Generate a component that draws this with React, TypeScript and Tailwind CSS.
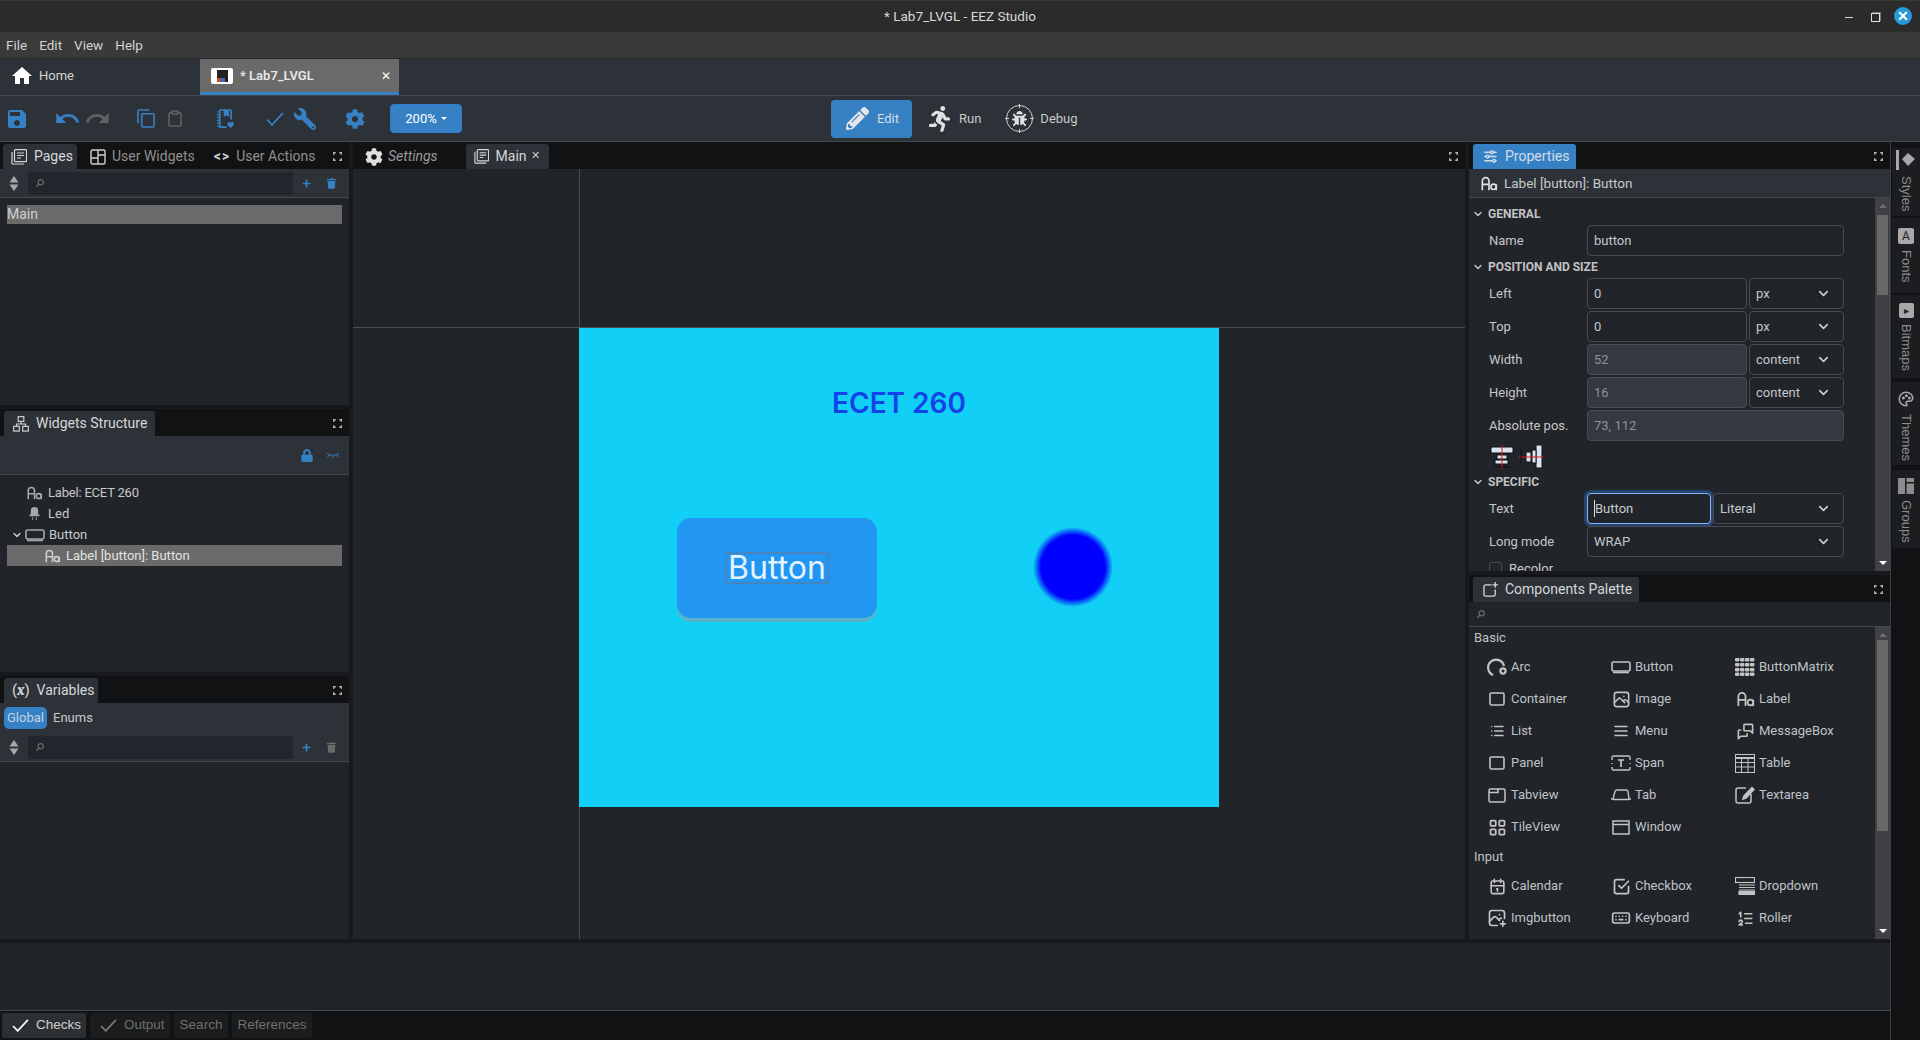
import { ReactNode } from "react"
import { FaCog, FaWrench, FaPencilAlt, FaRunning, FaTrash, FaLock, FaBug, FaSearch, FaPlus } from "react-icons/fa"
import { MdHome, MdSave, MdUndo, MdRedo } from "react-icons/md"
import {
  TbCalendar,
  TbCheckbox,
  TbChevronDown,
  TbKeyboard,
  TbLayoutGrid,
  TbListNumbers,
  TbList,
  TbMenu2,
  TbMessages,
  TbPhoto,
  TbPhotoPlus,
  TbAdjustmentsHorizontal,
  TbPalette,
} from "react-icons/tb"
import { LuClipboard } from "react-icons/lu"

const ui = "font-['Roboto','Noto_Sans',sans-serif]"

function AaIcon({ className = "w-[17px] h-[15px]" }: { className?: string }) {
  return (
    <svg viewBox="0 0 20 18" className={className} fill="none" stroke="currentColor" strokeWidth="2">
      <path d="M2 17V6a4 4 0 0 1 8 0v11M2 10h8" />
      <circle cx="15.5" cy="13" r="3.2" />
      <path d="M18.7 10v7" />
    </svg>
  )
}

function RectIcon({ wide }: { wide?: boolean }) {
  return (
    <svg viewBox="0 0 20 14" className="w-[20px] h-[14px]" fill="none" stroke="currentColor" strokeWidth="1.6">
      {wide ? <rect x="1" y="2" width="18" height="9" rx="1.5" /> : <rect x="3" y="1" width="14" height="12" rx="1.5" />}
      {wide && <path d="M2 12.5h16" />}
    </svg>
  )
}

function ArcIcon() {
  return (
    <svg viewBox="0 0 20 20" className="w-[20px] h-[20px]" fill="none" stroke="currentColor" strokeWidth="2.2">
      <path d="M6 18A8 8 0 1 1 17 9" />
      <circle cx="16" cy="14" r="2.6" />
    </svg>
  )
}

function MatrixIcon() {
  return (
    <svg viewBox="0 0 20 18" className="w-[20px] h-[18px]" fill="currentColor">
      {[0, 5, 10, 14.5].map((y) =>
        [0, 5, 10, 15].map((x) => <rect key={`${x}-${y}`} x={x} y={y} width="4.4" height="3.4" rx="0.8" />)
      )}
    </svg>
  )
}

function SpanIcon() {
  return (
    <svg viewBox="0 0 20 16" className="w-[20px] h-[16px]" fill="none" stroke="currentColor" strokeWidth="1.4">
      <path d="M1 5V2.5A1.5 1.5 0 0 1 2.5 1h15A1.5 1.5 0 0 1 19 2.5V5M1 8v1M19 8v1M1 12v1.500A1.500 1.500 0 0 0 2.500 15h15a1.500 1.500 0 0 0 1.500-1.500V12" />
      <path d="M7 5h6M10 5v7" strokeWidth="1.7" />
    </svg>
  )
}

function TableIcon() {
  return (
    <svg viewBox="0 0 20 19" className="w-[20px] h-[19px]" fill="none" stroke="currentColor" strokeWidth="1">
      <rect x="0.5" y="0.5" width="19" height="18" />
      <path d="M0 4h20" strokeWidth="2" />
      <path d="M0 8.500h20M0 13h20M6.500 4v15M13 4v15" />
    </svg>
  )
}

function TabIcon() {
  return (
    <svg viewBox="0 0 20 12" className="w-[20px] h-[12px]" fill="none" stroke="currentColor" strokeWidth="1.4">
      <path d="M0 10h2l2-7.500A2 2 0 0 1 6 1h9a2 2 0 0 1 2 1.500l1 7.500h2M2 10.500h16" />
    </svg>
  )
}

function TabviewIcon() {
  return (
    <svg viewBox="0 0 18 15" className="w-[18px] h-[15px]" fill="none" stroke="currentColor" strokeWidth="1.5">
      <rect x="1" y="1" width="16" height="13" rx="1.5" />
      <path d="M1 4.500h9V1" />
    </svg>
  )
}

function WindowIcon() {
  return (
    <svg viewBox="0 0 18 15" className="w-[18px] h-[15px]" fill="none" stroke="currentColor" strokeWidth="1.5">
      <rect x="1" y="1" width="16" height="13" />
      <path d="M1 4.500h16" />
    </svg>
  )
}

function TextareaIcon() {
  return (
    <svg viewBox="0 0 20 18" className="w-[20px] h-[18px]" fill="none" stroke="currentColor" strokeWidth="1.5">
      <path d="M11 2H3a2 2 0 0 0-2 2v11a2 2 0 0 0 2 2h11a2 2 0 0 0 2-2V8" />
      <path d="M8 13l1-3 8-8.500 2 2-8 8.500z" fill="currentColor" />
    </svg>
  )
}

function DropdownIcon() {
  return (
    <svg viewBox="0 0 20 18" className="w-[20px] h-[18px]" fill="none" stroke="currentColor" strokeWidth="1.2">
      <rect x="0.500" y="0.500" width="19" height="5" />
      <path d="M4 8h16M4 10.500h16M4 13h16" />
      <rect x="4" y="14.500" width="16" height="3" fill="currentColor" />
    </svg>
  )
}

function CheckMark({ className }: { className: string }) {
  return (
    <svg viewBox="0 0 18 14" className={className} fill="none" stroke="currentColor" strokeWidth="1.8">
      <path d="M1 7.500l5 5.300L17 1" />
    </svg>
  )
}

function PagesIcon({ className }: { className: string }) {
  return (
    <svg viewBox="0 0 16 16" className={className} fill="none" stroke="currentColor" strokeWidth="1.2">
      <path d="M1 3v11.500a.500.500 0 0 0 .500.500H13" />
      <rect x="3.500" y=".700" width="12" height="12" rx="1" />
      <path d="M6 4h7M6 6.500h7M6 9h4" />
    </svg>
  )
}

function WidgetsIcon() {
  return (
    <svg viewBox="0 0 16 16" className="w-[16px] h-[16px] text-[#d0d0d0]" fill="none" stroke="currentColor" strokeWidth="1.4">
      <rect x="1" y="1" width="14" height="14" rx="1.500" />
      <path d="M8 1v14M8 6h7M1 9h7" />
    </svg>
  )
}

function HierarchyIcon() {
  return (
    <svg viewBox="0 0 17 17" className="w-[16px] h-[16px]" fill="none" stroke="currentColor" strokeWidth="1.2">
      <rect x="5.500" y=".700" width="6" height="5" />
      <rect x=".700" y="11" width="6" height="5" />
      <rect x="10.300" y="11" width="6" height="5" />
      <path d="M8.500 5.700v2.800M3.700 11V8.500h9.600V11" />
    </svg>
  )
}

function PaletteAddIcon() {
  return (
    <svg viewBox="0 0 16 16" className="w-[15px] h-[15px]" fill="none" stroke="currentColor" strokeWidth="1.4">
      <path d="M9 3H3a2 2 0 0 0-2 2v8a2 2 0 0 0 2 2h8a2 2 0 0 0 2-2V8M13 0v6M10 3h6" />
    </svg>
  )
}

function CopyIcon() {
  return (
    <svg viewBox="0 0 19 20" className="w-[18px] h-[19px]" fill="none" stroke="currentColor" strokeWidth="1.700">
      <path d="M13 1H2.500A1.500 1.500 0 0 0 1 2.500V15" />
      <rect x="5" y="5" width="13" height="14" rx="1" />
    </svg>
  )
}

function NotebookIcon() {
  return (
    <svg viewBox="0 0 20 21" className="w-[19px] h-[20px]" fill="none" stroke="currentColor" strokeWidth="1.700">
      <path d="M4 1h11a1 1 0 0 1 1 1v9M4 1v18h7" />
      <path d="M1 3h2M1 6h2M1 9h2M1 12h2M1 15h2M1 18h2" strokeWidth="1.500" />
      <path d="M9 1v6l2-1.500L13 7V1" fill="currentColor" />
      <path d="M15.500 20l-3.300-3.300a2 2 0 0 1 3.300-2.200 2 2 0 0 1 3.300 2.200z" fill="currentColor" stroke="none" />
    </svg>
  )
}

function Expand() {
  return (
    <svg viewBox="0 0 10 10" className="w-[9px] h-[9px] text-[#b5b5b5]" fill="none" stroke="currentColor" strokeWidth="1.6">
      <path d="M0.800 3V0.800H3M7 0.800h2.200V3M9.200 7v2.200H7M3 9.200H0.800V7" />
    </svg>
  )
}

function Sort() {
  return (
    <svg viewBox="0 0 10 15" className="w-[10px] h-[15px] text-[#a8a8a8]" fill="currentColor">
      <path d="M5 0l4.500 6.500h-9zM5 15L0.500 8.500h9z" />
    </svg>
  )
}

function SearchRow({ trash }: { trash: string }) {
  return (
    <div className="h-[29px] flex items-center bg-[#2d3238] border-b border-[#44484d] shrink-0">
      <span className="w-[28px] flex justify-center"><Sort /></span>
      <div className="w-[265px] h-[23px] bg-[#22252b] flex items-center pl-[8px]">
        <FaSearch className="w-[8px] h-[8px] text-[#6e6e6e]" style={{ transform: "scaleX(-1)" }} />
      </div>
      <FaPlus className="ml-[9px] w-[9px] h-[9px] text-[#3681c4]" />
      <FaTrash className={`ml-[16px] w-[9px] h-[11px] ${trash}`} />
    </div>
  )
}

function TabRow({ children, expand = true }: { children: ReactNode; expand?: boolean }) {
  return (
    <div className="h-[27px] bg-[#111214] flex items-end shrink-0 relative">
      {children}
      {expand && <span className="ml-auto mr-[7px] mb-[8px] flex"><Expand /></span>}
    </div>
  )
}

function ActiveTab({ icon, label, className }: { icon: ReactNode; label: string; className?: string }) {
  return (
    <div className={`h-[25px] bg-[#2d3238] rounded-t-[3px] flex items-center gap-[7px] text-[14px] text-[#d7d7d7] ${className}`}>
      {icon}
      {label}
    </div>
  )
}

function PropRow({ label, children }: { label: string; children: ReactNode }) {
  return (
    <div className="h-[33px] flex items-center pl-[20px] shrink-0">
      <span className="w-[98px] text-[#c7c7c7]">{label}</span>
      <div className="flex gap-[2px]">{children}</div>
    </div>
  )
}

function Field({ value, w, disabled, focus }: { value: string; w: string; disabled?: boolean; focus?: boolean }) {
  if (focus) {
    return (
      <div className={`${w} h-[31px] border border-[#86b7fe] rounded-[4px] bg-[#212429] flex items-center px-[6px] text-[#c9c9c9] shadow-[0_0_0_3px_#24446e]`}>
        <span className="w-px h-[17px] bg-[#dddddd]" />
        {value}
      </div>
    )
  }
  return (
    <div className={`${w} h-[31px] border border-[#484c52] rounded-[4px] flex items-center px-[6px] ${disabled ? "bg-[#343840] text-[#8f9398]" : "bg-[#212429] text-[#c3c8cc]"}`}>
      {value}
    </div>
  )
}

function Select({ value, w }: { value: string; w: string }) {
  return (
    <div className={`${w} h-[31px] border border-[#484c52] rounded-[4px] bg-[#212429] flex items-center justify-between pl-[6px] pr-[12px] text-[#c3c8cc]`}>
      {value}
      <TbChevronDown className="w-[15px] h-[15px] text-[#d0d0d0]" strokeWidth={2.500} />
    </div>
  )
}

function Section({ label }: { label: string }) {
  return (
    <div className="h-[20px] flex items-center gap-[4px] pl-[3px] text-[12px] font-bold text-[#c2c2c2] shrink-0">
      <TbChevronDown className="w-[12px] h-[12px]" strokeWidth={3} />
      {label}
    </div>
  )
}

function ScrollBar({ thumb, gap }: { thumb: string; gap: string }) {
  return (
    <div className="w-[15px] bg-[#3f4144] flex flex-col items-center shrink-0">
      <span className={`mt-[6px] w-0 h-0 border-x-[4px] border-x-transparent border-b-[4px] border-b-[#6e6e6e]`} />
      <div className={`${gap} ${thumb} w-[11px] bg-[#686868]`} />
      <span className="mt-auto mb-[6px] w-0 h-0 border-x-[4px] border-x-transparent border-t-[4px] border-t-white" />
    </div>
  )
}

const basic: [ReactNode, string][] = [
  [<ArcIcon />, "Arc"],
  [<RectIcon wide />, "Button"],
  [<MatrixIcon />, "ButtonMatrix"],
  [<RectIcon />, "Container"],
  [<TbPhoto className="w-[19px] h-[19px]" />, "Image"],
  [<AaIcon className="w-[19px] h-[16px]" />, "Label"],
  [<TbList className="w-[18px] h-[18px]" />, "List"],
  [<TbMenu2 className="w-[18px] h-[18px]" />, "Menu"],
  [<TbMessages className="w-[19px] h-[19px]" />, "MessageBox"],
  [<RectIcon />, "Panel"],
  [<SpanIcon />, "Span"],
  [<TableIcon />, "Table"],
  [<TabviewIcon />, "Tabview"],
  [<TabIcon />, "Tab"],
  [<TextareaIcon />, "Textarea"],
  [<TbLayoutGrid className="w-[21px] h-[21px]" />, "TileView"],
  [<WindowIcon />, "Window"],
]

const input: [ReactNode, string][] = [
  [<TbCalendar className="w-[19px] h-[19px]" />, "Calendar"],
  [<TbCheckbox className="w-[21px] h-[21px]" />, "Checkbox"],
  [<DropdownIcon />, "Dropdown"],
  [<TbPhotoPlus className="w-[20px] h-[20px]" />, "Imgbutton"],
  [<TbKeyboard className="w-[20px] h-[20px]" />, "Keyboard"],
  [<TbListNumbers className="w-[19px] h-[19px]" />, "Roller"],
]

function PaletteGrid({ items }: { items: [ReactNode, string][] }) {
  return (
    <div className="grid grid-cols-[124px_124px_124px] auto-rows-[32px] pl-[18px]">
      {items.map(([icon, label]) => (
        <div key={label} className="flex items-center">
          <span className="w-[24px] flex justify-center text-[#c4c4c4] -ml-[2px] mr-[2px]">{icon}</span>
          <span className="text-[#bfc3c7]">{label}</span>
        </div>
      ))}
    </div>
  )
}

function SideTab({ icon, label, box }: { icon: ReactNode; label: string; box: string }) {
  return (
    <div className={`${box} bg-[#1b1d20] flex flex-col items-center gap-[6px] shrink-0`}>
      {icon}
      <span className="[writing-mode:vertical-rl] font-['Liberation_Sans',sans-serif] text-[13px] text-[#8c8c8c]">{label}</span>
    </div>
  )
}

function AppIcon() {
  return (
    <span className="w-[22px] h-[16px] bg-white rounded-[2px] flex items-center justify-center">
      <span className="w-[11px] h-[12px] bg-[#222] relative block overflow-hidden">
        <span className="absolute left-0 bottom-0 w-[4px] h-[4px] bg-[#d9442b]" />
        <span className="absolute left-[4px] bottom-0 w-[4px] h-[4px] bg-[#2a6ad1]" />
      </span>
    </span>
  )
}

export default function App() {
  return (
    <div className={`w-[1920px] h-[1040px] overflow-hidden flex flex-col bg-[#111214] text-[13px] text-[#c9c9c9] ${ui}`}>
      {/* title bar */}
      <div className="h-[32px] bg-[#2b2b2b] border-t border-[#3a3a3a] flex items-center relative shrink-0">
        <span className="mx-auto text-[13.500px] text-[#d8d8d8]">* Lab7_LVGL - EEZ Studio</span>
        <div className="absolute right-[8px] top-[6px] flex items-center">
          <span className="w-[8px] h-px bg-[#d8d8d8] mr-[18px] mt-[3px]" />
          <span className="w-[9px] h-[9px] border border-[#e0e0e0] mr-[14px] mt-[2px] shadow-[1px_-1px_0_#777]" />
          <span className="w-[18px] h-[18px] rounded-full bg-[#2799d6] text-white flex items-center justify-center text-[14px] font-bold leading-none">✕</span>
        </div>
      </div>
      {/* menu */}
      <div className="h-[26px] bg-[#3a3a3a] border-b border-[#2b2b2b] flex items-center gap-[12px] pl-[6px] text-[13.500px] text-[#d2d2d2] shrink-0 box-content">
        <span>File</span>
        <span>Edit</span>
        <span>View</span>
        <span>Help</span>
      </div>
      {/* project tabs */}
      <div className="h-[36px] bg-[#2d3238] flex shrink-0">
        <div className="w-[200px] flex items-center pl-[10px] gap-[5px] text-[#d2d2d2] pb-[3px]">
          <MdHome className="w-[24px] h-[24px] text-white" />
          Home
        </div>
        <div className="w-[199px] bg-[#6a6a6a] border-b-[3px] border-[#3681c4] flex items-center pl-[11px] gap-[7px] font-semibold text-[#e6e6e6]">
          <AppIcon />
          * Lab7_LVGL
          <span className="ml-auto mr-[8px] text-[12px] font-normal text-white">✕</span>
        </div>
      </div>
      {/* toolbar */}
      <div className="h-[47px] bg-[#2d3238] border-y border-[#44484d] flex items-center text-[#3681c4] shrink-0">
        <MdSave className="ml-[5px] w-[24px] h-[24px]" />
        <MdUndo className="ml-[25px] w-[27px] h-[27px]" />
        <MdRedo className="ml-[3px] w-[27px] h-[27px] text-[#626262]" />
        <span className="ml-[26px] flex"><CopyIcon /></span>
        <LuClipboard className="ml-[11px] w-[18px] h-[19px] text-[#626262]" />
        <span className="ml-[32px] flex"><NotebookIcon /></span>
        <CheckMark className="ml-[31px] w-[18px] h-[14px]" />
        <FaWrench className="ml-[10px] w-[22px] h-[22px]" style={{ transform: "scaleX(-1)" }} />
        <FaCog className="ml-[29px] w-[20px] h-[20px]" />
        <div className="ml-[25px] w-[72px] h-[29px] rounded-[4px] bg-[#3681c4] border border-[#2d7cd0] flex items-center justify-center gap-[4px] text-[13px] text-white">
          200%
          <span className="w-0 h-0 border-x-[3px] border-x-transparent border-t-[3px] border-t-white" />
        </div>
        <div className="ml-[369px] w-[81px] h-[38px] rounded-[4px] bg-[#3681c4] flex items-center gap-[8px] pl-[15px] text-[#d3dde6]">
          <FaPencilAlt className="w-[23px] h-[23px] text-[#e6e6e6]" />
          Edit
        </div>
        <div className="ml-[16px] flex items-center text-[#c9c9c9]">
          <FaRunning className="w-[23px] h-[26px] text-[#e0e0e0]" />
          <span className="ml-[8px]">Run</span>
        </div>
        <div className="ml-[25px] flex items-center text-[#c9c9c9]">
          <span className="w-[27px] h-[27px] rounded-full border border-[#d0d0d0] flex items-center justify-center relative">
            <FaBug className="w-[15px] h-[15px] text-[#e0e0e0]" />
            <span className="absolute -top-[2px] left-[12px] w-px h-[4px] bg-[#d0d0d0]" />
            <span className="absolute -bottom-[2px] left-[12px] w-px h-[4px] bg-[#d0d0d0]" />
            <span className="absolute -left-[2px] top-[12px] w-[4px] h-px bg-[#d0d0d0]" />
            <span className="absolute -right-[2px] top-[12px] w-[4px] h-px bg-[#d0d0d0]" />
          </span>
          <span className="ml-[7px]">Debug</span>
        </div>
      </div>
      {/* workspace */}
      <div className="flex-1 flex min-h-0">
        <div className="w-[1890px] flex flex-col">
          <div className="h-[797px] flex shrink-0 bg-[#17191c]">
            {/* left column */}
            <div className="w-[349px] flex flex-col">
              <div className="h-[263px] bg-[#212429] flex flex-col">
                <TabRow>
                  <ActiveTab className="ml-[3px] w-[74px] pl-[8px] gap-[6px]" icon={<PagesIcon className="w-[16px] h-[16px] text-[#d7d7d7]" />} label="Pages" />
                  <div className="h-[25px] ml-[13px] flex items-center gap-[6px] text-[14px] text-[#8f8f8f]">
                    <WidgetsIcon />
                    User Widgets
                  </div>
                  <div className="h-[25px] ml-[19px] flex items-center gap-[6px] text-[14px] text-[#8f8f8f]">
                    <span className="text-[#d0d0d0] font-bold tracking-[1px]">&lt;&gt;</span>
                    User Actions
                  </div>
                </TabRow>
                <SearchRow trash="text-[#3681c4]" />
                <div className="mt-[7px] mx-[7px] h-[19px] bg-[#6a6a6a] flex items-center text-[14px] text-[#cfcfcf]">Main</div>
              </div>
              <div className="h-[4px] shrink-0" />
              <div className="h-[263px] bg-[#212429] flex flex-col">
                <TabRow>
                  <ActiveTab className="ml-[4px] w-[151px] pl-[9px]" icon={<HierarchyIcon />} label="Widgets Structure" />
                </TabRow>
                <div className="h-[39px] bg-[#2d3238] border-b border-[#44484d] flex items-center justify-end pr-[9px] gap-[13px] text-[#3681c4] shrink-0">
                  <FaLock className="w-[12px] h-[13px]" />
                  <svg viewBox="0 0 14 8" className="w-[14px] h-[8px]" fill="none" stroke="currentColor" strokeWidth="1">
                    <path d="M1 2c3 3 9 3 12 0M3 4L1.500 6M7 5v2M11 4l1.500 2" />
                  </svg>
                </div>
                <div className="pt-[7px] text-[14px] text-[#c9c9c9]">
                  <div className="h-[21px] flex items-center pl-[26px] gap-[5px]"><AaIcon className="w-[17px] h-[14px] text-[#a8a8a8]" /><span className="text-[13px] tracking-[-0.2px]">Label: ECET 260</span></div>
                  <div className="h-[21px] flex items-center pl-[29px] gap-[8px]">
                    <svg viewBox="0 0 12 16" className="w-[11px] h-[15px] text-[#a8a8a8]" fill="currentColor"><path d="M2 9V5a4 4 0 0 1 8 0v4h1.500v2H.500V9zM3.500 12h1v3h-1zM7.500 12h1v3h-1z" /></svg>
                    <span className="text-[13px]">Led</span>
                  </div>
                  <div className="h-[21px] flex items-center pl-[11px]">
                    <TbChevronDown className="w-[12px] h-[12px]" strokeWidth={3} />
                    <span className="mx-[2px] text-[#a8a8a8] flex"><RectIcon wide /></span>
                    <span className="ml-[2px] text-[13px]">Button</span>
                  </div>
                  <div className="h-[21px] mx-[7px] bg-[#6a6a6a] flex items-center pl-[37px] gap-[5px]"><AaIcon className="w-[17px] h-[14px] text-[#cfcfcf]" /><span className="text-[13px] text-[#e2e2e2]">Label [button]: Button</span></div>
                </div>
              </div>
              <div className="h-[4px] shrink-0" />
              <div className="h-[263px] bg-[#212429] flex flex-col">
                <TabRow>
                  <ActiveTab className="ml-[4px] w-[94px] pl-[8px]" icon={<span className="text-[15px] text-[#d7d7d7]">(<i className="font-serif font-bold">x</i>)</span>} label="Variables" />
                </TabRow>
                <div className="h-[30px] bg-[#2d3238] flex items-center pl-[4px] gap-[6px] shrink-0">
                  <span className="w-[43px] h-[22px] rounded-[5px] bg-[#3681c4] flex items-center justify-center text-[#c7d3dd]">Global</span>
                  <span>Enums</span>
                </div>
                <SearchRow trash="text-[#6a6a6a]" />
              </div>
            </div>
            <div className="w-[4px] shrink-0" />
            {/* canvas */}
            <div className="w-[1112px] bg-[#212429] flex flex-col shrink-0">
              <TabRow>
                <div className="h-[25px] ml-[12px] flex items-center gap-[5px] text-[14px] italic text-[#9a9a9a]">
                  <FaCog className="w-[18px] h-[18px] text-[#e0e0e0]" />
                  Settings
                </div>
                <ActiveTab className="ml-[28px] w-[83px] pl-[8px]" icon={<PagesIcon className="w-[15px] h-[15px]" />} label="Main" />
                <span className="-ml-[18px] mb-[5px] text-[11px] text-[#c9c9c9]">✕</span>
              </TabRow>
              <div className="flex-1 relative overflow-hidden">
                <div className="absolute left-[226px] top-0 bottom-0 w-px bg-[#4a4d52]" />
                <div className="absolute left-0 right-0 top-[158px] h-px bg-[#4a4d52]" />
                <div className="absolute left-[226px] top-[159px] w-[640px] h-[479px] bg-[#12cff5] overflow-hidden">
                  <span className="absolute left-0 right-0 top-[59px] text-center font-['Inter',sans-serif] text-[28px] leading-[32px] font-semibold text-[#1243e8]">ECET 260</span>
                  <div className="absolute left-[98px] top-[190px] w-[200px] h-[100px] rounded-[14px] bg-[#2196f3] shadow-[0_4px_0_#5ab4c8] flex items-center justify-center">
                    <span className="w-[104px] h-[32px] border-[2px] border-[#4785bf] font-['Inter',sans-serif] text-[32px] leading-[27px] text-center text-[#e4f3fd] whitespace-nowrap">Button</span>
                  </div>
                  <div className="absolute left-[454px] top-[199px] w-[80px] h-[80px] rounded-full bg-[radial-gradient(circle_closest-side,#0000ff_0%,#0000ff_80%,#12cff5_100%)]" />
                </div>
              </div>
            </div>
            <div className="w-[4px] shrink-0" />
            {/* right column */}
            <div className="w-[421px] flex flex-col">
              <div className="h-[429px] bg-[#212429] flex flex-col">
                <TabRow>
                  <div className="ml-[4px] h-[25px] w-[103px] bg-[#3681c4] rounded-t-[3px] flex items-center gap-[6px] pl-[9px] text-[14px] text-[#d3dde6]">
                    <TbAdjustmentsHorizontal className="w-[17px] h-[17px]" />
                    Properties
                  </div>
                </TabRow>
                <div className="h-[29px] bg-[#2d3238] border-b border-[#44484d] flex items-center pl-[11px] gap-[6px] shrink-0 text-[13.500px] text-[#c9c9c9]">
                  <AaIcon className="w-[18px] h-[15px] text-[#e0e0e0]" />
                  Label [button]: Button
                </div>
                <div className="flex-1 flex min-h-0">
                  <div className="flex-1 overflow-hidden pt-[6px]">
                    <Section label="GENERAL" />
                    <PropRow label="Name"><Field value="button" w="w-[257px]" /></PropRow>
                    <Section label="POSITION AND SIZE" />
                    <PropRow label="Left"><Field value="0" w="w-[160px]" /><Select value="px" w="w-[95px]" /></PropRow>
                    <PropRow label="Top"><Field value="0" w="w-[160px]" /><Select value="px" w="w-[95px]" /></PropRow>
                    <PropRow label="Width"><Field value="52" w="w-[160px]" disabled /><Select value="content" w="w-[95px]" /></PropRow>
                    <PropRow label="Height"><Field value="16" w="w-[160px]" disabled /><Select value="content" w="w-[95px]" /></PropRow>
                    <PropRow label="Absolute pos."><Field value="73, 112" w="w-[257px]" disabled /></PropRow>
                    <div className="h-[30px] pl-[21px] flex items-center gap-[5px]">
                      <svg viewBox="0 0 24 24" className="w-[24px] h-[24px]">
                        <rect x="1" y="2" width="22" height="6" fill="#d8e4f0" stroke="#111" />
                        <rect x="7" y="10" width="10" height="4" fill="#d8e4f0" stroke="#111" />
                        <rect x="5" y="15" width="13" height="4" fill="#d8e4f0" stroke="#111" />
                        <path d="M12 0v24" stroke="#e01818" strokeWidth="1" />
                        <path d="M3 22h18" stroke="#111" />
                      </svg>
                      <svg viewBox="0 0 24 24" className="w-[24px] h-[24px]">
                        <rect x="17" y="0" width="6" height="23" fill="#d8e4f0" stroke="#111" />
                        <rect x="7" y="7" width="5" height="10" fill="#d8e4f0" stroke="#111" />
                        <rect x="13" y="5" width="4" height="13" fill="#d8e4f0" stroke="#111" />
                        <path d="M0 12h24" stroke="#e01818" />
                        <path d="M2 4v16" stroke="#111" />
                      </svg>
                    </div>
                    <Section label="SPECIFIC" />
                    <PropRow label="Text"><Field value="Button" w="w-[124px]" focus /><Select value="Literal" w="w-[131px]" /></PropRow>
                    <PropRow label="Long mode"><Select value="WRAP" w="w-[257px]" /></PropRow>
                    <div className="flex items-center pl-[20px] gap-[7px] mt-[1px]">
                      <span className="w-[13px] h-[13px] rounded-[3px] border border-[#484c52]" />
                      Recolor
                    </div>
                  </div>
                  <ScrollBar thumb="h-[80px]" gap="mt-[7px]" />
                </div>
              </div>
              <div className="h-[4px] shrink-0" />
              <div className="h-[364px] bg-[#212429] flex flex-col">
                <TabRow>
                  <ActiveTab className="ml-[4px] w-[166px] pl-[10px]" icon={<PaletteAddIcon />} label="Components Palette" />
                </TabRow>
                <div className="h-[25px] border-b border-[#44484d] flex items-center pl-[8px] shrink-0">
                  <FaSearch className="w-[8px] h-[8px] text-[#6e6e6e]" style={{ transform: "scaleX(-1)" }} />
                </div>
                <div className="flex-1 flex min-h-0">
                  <div className="flex-1 overflow-hidden text-[#bfc3c7]">
                    <div className="h-[24px] pl-[5px] pb-[2px] flex items-center">Basic</div>
                    <PaletteGrid items={basic} />
                    <div className="h-[27px] pl-[5px] pt-[1px] flex items-center">Input</div>
                    <PaletteGrid items={input} />
                  </div>
                  <ScrollBar thumb="h-[191px]" gap="mt-[3px]" />
                </div>
              </div>
            </div>
          </div>
          <div className="h-[4px] bg-[#17191c] shrink-0" />
          <div className="h-[67px] bg-[#212429] shrink-0" />
          <div className="h-[1px] bg-[#44484d] shrink-0" />
          {/* bottom tabs */}
          <div className="h-[29px] pt-[2px] pl-[2px] flex gap-[4px] font-['Liberation_Sans',sans-serif] text-[13.500px] text-[#6f6f6f]">
            <div className="h-[25px] w-[84px] bg-[#2d3033] rounded-[2px] flex items-center pl-[10px] gap-[7px] text-[#d0d0d0]">
              <CheckMark className="w-[17px] h-[13px] text-white" />
              Checks
            </div>
            <div className="h-[25px] w-[80px] bg-[#1a1c1e] rounded-[2px] flex items-center pl-[10px] gap-[7px]">
              <CheckMark className="w-[17px] h-[13px] text-[#7a7a7a]" />
              Output
            </div>
            <div className="h-[25px] w-[54px] bg-[#1a1c1e] rounded-[2px] flex items-center justify-center">Search</div>
            <div className="h-[25px] w-[80px] bg-[#1a1c1e] rounded-[2px] flex items-center justify-center">References</div>
          </div>
        </div>
        {/* side tabs */}
        <div className="w-[30px] border-l border-[#3a3d41] pl-[1px] flex flex-col">
          <SideTab box="mt-[6px] h-[68px] pt-[2px]" label="Styles" icon={
            <svg viewBox="0 0 20 20" className="w-[20px] h-[20px] text-[#a8a8a8]" fill="currentColor"><rect x="0" y="0" width="3" height="20" /><path d="M12 3l7 6-7 7-6-7z" /></svg>
          } />
          <SideTab box="mt-[2px] h-[75px] pt-[10px]" label="Fonts" icon={<span className="w-[16px] h-[16px] bg-[#a8a8a8] rounded-[2px] text-[#222] text-[12px] leading-[16px] text-center">A</span>} />
          <SideTab box="mt-[2px] h-[83px] pt-[8px]" label="Bitmaps" icon={<span className="w-[15px] h-[15px] bg-[#a8a8a8] rounded-[2px] text-[#222] text-[10px] leading-[15px] text-center">▸</span>} />
          <SideTab box="mt-[4px] h-[83px] pt-[8px]" label="Themes" icon={<TbPalette className="w-[18px] h-[18px] text-[#a8a8a8]" />} />
          <SideTab box="mt-[5px] h-[78px] pt-[8px]" label="Groups" icon={
            <svg viewBox="0 0 16 16" className="w-[16px] h-[16px] text-[#8c8c8c]" fill="currentColor"><rect width="7" height="16" y="0" x="0" /><rect x="8.500" y="0" width="7.500" height="4" /><rect x="8.500" y="5.500" width="7.500" height="10.500" /></svg>
          } />
        </div>
      </div>
    </div>
  )
}
